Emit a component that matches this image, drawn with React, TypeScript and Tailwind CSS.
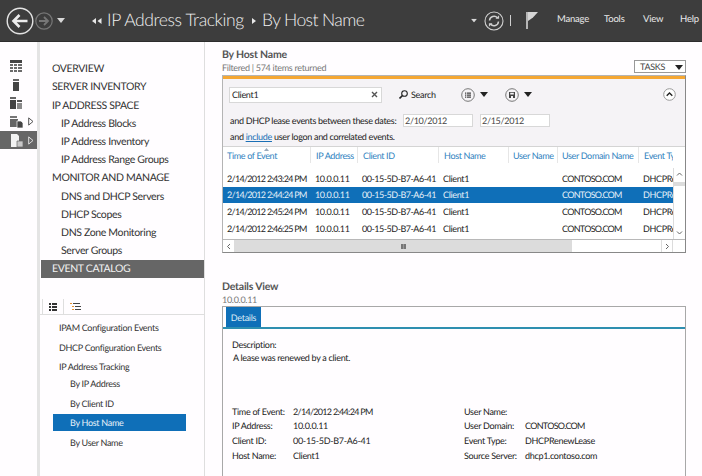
const navItems = [
  { label: "OVERVIEW", sub: false },
  { label: "SERVER INVENTORY", sub: false },
  { label: "IP ADDRESS SPACE", sub: false },
  { label: "IP Address Blocks", sub: true },
  { label: "IP Address Inventory", sub: true },
  { label: "IP Address Range Groups", sub: true },
  { label: "MONITOR AND MANAGE", sub: false },
  { label: "DNS and DHCP Servers", sub: true },
  { label: "DHCP Scopes", sub: true },
  { label: "DNS Zone Monitoring", sub: true },
  { label: "Server Groups", sub: true },
];

const rows = [
  { time: "2/14/2012 2:43:24 PM", selected: false },
  { time: "2/14/2012 2:44:24 PM", selected: true },
  { time: "2/14/2012 2:45:24 PM", selected: false },
  { time: "2/14/2012 2:46:25 PM", selected: false },
];

const columns = [
  { label: "Time of Event", w: "w-[88px]", pl: "pl-[4px]" },
  { label: "IP Address", w: "w-[47px]", pl: "pl-[5px]" },
  { label: "Client ID", w: "w-[81px]", pl: "pl-[5px]" },
  { label: "Host Name", w: "w-[70px]", pl: "pl-[5px]" },
  { label: "User Name", w: "w-[49px]", pl: "pl-[4px]" },
  { label: "User Domain Name", w: "w-[81px]", pl: "pl-[4px]" },
  { label: "Event Type", w: "w-[34px]", pl: "pl-[5px]" },
];

const leftFields = [
  ["Time of Event:", "2/14/2012 2:44:24 PM"],
  ["IP Address:", "10.0.0.11"],
  ["Client ID:", "00-15-5D-B7-A6-41"],
  ["Host Name:", "Client1"],
];

const rightFields = [
  ["User Name:", ""],
  ["User Domain:", "CONTOSO.COM"],
  ["Event Type:", "DHCPRenewLease"],
  ["Source Server:", "dhcp1.contoso.com"],
];

const Caret = ({ className }: { className: string }) => (
  <svg width="8" height="5" viewBox="0 0 8 5" className={className}>
    <path d="M0 0h8L4 5z" fill="currentColor" />
  </svg>
);

const RailIcons = () => (
  <div className="w-[37px] shrink-0 flex flex-col pt-[15px]">
    <div className="h-[18px] pl-[10px] flex items-center">
      <svg width="12" height="12" viewBox="0 0 12 12">
        <path d="M0 0h12v3H0z" fill="#444" />
        <path d="M0 4h3v2H0zM4 4h3v2H4zM8 4h4v2H8zM0 7h3v2H0zM4 7h3v2H4zM8 7h4v2H8zM0 10h3v2H0zM4 10h3v2H4zM8 10h4v2H8z" fill="#6b6b6b" />
      </svg>
    </div>
    <div className="h-[19px] pl-[13px] flex items-center">
      <svg width="6" height="12" viewBox="0 0 6 12">
        <path d="M0 0h6v2H0z" fill="#666" />
        <path d="M0 3h6v9H0z" fill="#444" />
      </svg>
    </div>
    <div className="h-[18px] pl-[10px] flex items-center">
      <svg width="12" height="12" viewBox="0 0 12 12">
        <path d="M0 0h6v2H0z" fill="#666" />
        <path d="M0 3h6v9H0z" fill="#444" />
        <path d="M7 3h5v2H7z" fill="#555" />
        <path d="M7 6h5v6H7z" fill="#8a8a8a" />
      </svg>
    </div>
    <div className="h-[19px] pl-[10px] flex items-center gap-[5px]">
      <svg width="13" height="12" viewBox="0 0 13 12">
        <path d="M0 0h7v2H0z" fill="#777" />
        <path d="M0 3h8v8H0z" fill="#666" />
        <path d="M7 5h4l2 2v5H7z" fill="#444" stroke="#fff" strokeWidth="0.7" />
      </svg>
      <svg width="6" height="9" viewBox="0 0 6 9">
        <path d="M0.7 0.9v7.2L5 4.5z" fill="none" stroke="#555" />
      </svg>
    </div>
    <div className="h-[18px] pl-[11px] flex items-center gap-[5px] bg-[#666666]">
      <svg width="12" height="13" viewBox="0 0 12 13">
        <path d="M0 0h6l2 2v11H0z" fill="#f2f2f2" />
        <path d="M6 7h6v6H6z" fill="#c8c8c8" stroke="#666" strokeWidth="0.7" />
      </svg>
      <svg width="6" height="9" viewBox="0 0 6 9">
        <path d="M0.7 0.9v7.2L5 4.5z" fill="none" stroke="#ddd" />
      </svg>
    </div>
  </div>
);

const Header = () => (
  <header className="h-[42px] shrink-0 flex items-center bg-[#3d3d3d] border-b border-[#2d2d2d] text-white">
    <svg width="28" height="28" viewBox="0 0 28 28" className="ml-[6px]">
      <circle cx="14" cy="14" r="12.8" fill="none" stroke="#e4e4e4" strokeWidth="1.4" />
      <path d="M21.5 14H8M13.5 8l-6 6 6 6" fill="none" stroke="#ececec" strokeWidth="2.6" />
    </svg>
    <svg width="18" height="18" viewBox="0 0 18 18" className="ml-[1px]">
      <circle cx="9" cy="9" r="8.2" fill="none" stroke="#777" strokeWidth="1.2" />
      <path d="M4 9h9M9 5l4 4-4 4" fill="none" stroke="#777" strokeWidth="1.8" />
    </svg>
    <Caret className="ml-[4px] text-[#d8d8d8]" />
    <svg width="10" height="6" viewBox="0 0 10 6" className="ml-[27px]">
      <path d="M4 0v6L0 3zM9.500 0v6l-4-3z" fill="#e8e8e8" />
    </svg>
    <span className="ml-[5px] w-[137px] text-[17.5px] font-light tracking-[-0.4px] text-[#f2f2f2] whitespace-nowrap">IP Address Tracking</span>
    <svg width="4" height="6" viewBox="0 0 4 6" className="ml-[8px]">
      <path d="M0 0v6l4-3z" fill="#e8e8e8" />
    </svg>
    <span className="ml-[6px] text-[17.5px] font-light tracking-[-0.6px] text-[#f2f2f2] whitespace-nowrap">By Host Name</span>
    <Caret className="ml-auto text-[#d8d8d8] scale-75" />
    <svg width="20" height="20" viewBox="0 0 20 20" className="ml-[6px]">
      <circle cx="10" cy="10" r="9" fill="none" stroke="#d0d0d0" strokeWidth="1.1" />
      <path d="M5.5 9.5A4.5 4.5 0 0 1 13.5 7M14.5 10.5A4.5 4.5 0 0 1 6.5 13" fill="none" stroke="#d0d0d0" strokeWidth="1.5" />
      <path d="M11.5 7.8h3.6V4.2zM8.5 12.2H4.9v3.6z" fill="#d0d0d0" />
    </svg>
    <div className="ml-[6px] w-px h-[11px] bg-[#cfcfcf]" />
    <svg width="12" height="17" viewBox="0 0 12 17" className="ml-[15px]">
      <path d="M0 0h2v17H0z" fill="#b5b5b5" />
      <path d="M2 0h10L7 5.500 2 9z" fill="#d5d5d5" />
    </svg>
    <nav className="ml-[19px] flex text-[9.5px] tracking-[-0.2px] text-[#e8e8e8]">
      <span className="w-[47px]">Manage</span>
      <span className="w-[39px]">Tools</span>
      <span className="w-[37px]">View</span>
      <span className="w-[22px]">Help</span>
    </nav>
  </header>
);

const Sidebar = () => (
  <aside className="w-[165px] shrink-0 border-r border-[#dedede] pt-[18px] text-[10.5px] tracking-[-0.35px] text-[#333]">
    {navItems.map((item) => (
      <div key={item.label} className={`h-[18.2px] pt-[2px] flex items-center ${item.sub ? "pl-[21px]" : "pl-[12px]"}`}>
        {item.label}
      </div>
    ))}
    <div className="h-[18px] pt-[2px] ml-px flex items-center pl-[11px] bg-[#666666] text-[#f2f2f2]">EVENT CATALOG</div>

    <div className="mt-[21px] h-[16px] flex border-b border-[#dedede]">
      <div className="ml-[2px] w-[22px] h-[16px] border-l border-r border-[#dedede] flex items-center justify-center">
        <svg width="8" height="8" viewBox="0 0 8 8">
          <path d="M0 0h2v2H0zM3 0h5v2H3zM0 3h2v2H0zM3 3h5v2H3zM0 6h2v2H0zM3 6h5v2H3z" fill="#333" />
        </svg>
      </div>
      <div className="ml-[6px] flex items-center">
        <svg width="11" height="8" viewBox="0 0 11 8">
          <path d="M0 0h2v1H0zM2 3h2v1H2zM2 6h2v1H2z" fill="#e8912d" />
          <path d="M3 0h7v1H3zM5 3h6v1H5zM5 6h6v1H5z" fill="#444" />
        </svg>
      </div>
    </div>

    <div className="mt-[3.500px] text-[9px] tracking-[-0.3px]">
      <div className="h-[17px] pt-[2px] mb-[2.6px] pl-[19px] flex items-center">IPAM Configuration Events</div>
      <div className="h-[17px] pt-[2px] mb-[2.6px] pl-[19px] flex items-center">DHCP Configuration Events</div>
      <div className="h-[17px] pt-[1px] pl-[19px] flex items-center">IP Address Tracking</div>
      <div className="h-[17px] pt-[1px] mb-[2.6px] pl-[30px] flex items-center">By IP Address</div>
      <div className="h-[17px] pt-[2px] mb-[2.6px] pl-[30px] flex items-center">By Client ID</div>
      <div className="h-[17px] pt-[1px] mb-[2.6px] ml-[13px] w-[133px] pl-[17px] flex items-center bg-[#0f6fb8] text-[#e8f1f8]">By Host Name</div>
      <div className="h-[17px] pt-[2px] pl-[30px] flex items-center">By User Name</div>
    </div>
  </aside>
);

const SmallRoundIcon = ({ kind }: { kind: "list" | "save" }) => (
  <svg width="14" height="14" viewBox="0 0 14 14">
    <circle cx="7" cy="7" r="6.3" fill="none" stroke="#777" />
    {kind === "list" ? (
      <path d="M4 4.500h1.300v1.300H4zM6 4.500h4v1.300H6zM4 6.500h1.300v1.300H4zM6 6.500h4v1.300H6zM4 8.500h1.300v1.300H4zM6 8.500h4v1.300H6z" fill="#444" />
    ) : (
      <path fillRule="evenodd" d="M4 4h6v6H4zM5.200 4.800v1.800h3.600V4.800zM6 8v2h2V8z" fill="#444" />
    )}
  </svg>
);

const FilterBar = () => (
  <div className="h-[68px] bg-[#f5f3f6] border-b border-[#d4d4d4] text-[9px] tracking-[-0.3px] text-[#222]">
    <div className="h-[31px] flex items-center pl-[6px]">
      <div className="w-[153px] h-[16px] flex items-center justify-between px-[2px] bg-white border border-[#d8d8d8]">
        <span>Client1</span>
        <svg width="7" height="7" viewBox="0 0 7 7" className="mr-[1px]">
          <path d="M1 1l5 5M6 1L1 6" stroke="#555" strokeWidth="1.4" />
        </svg>
      </div>
      <svg width="9" height="9" viewBox="0 0 9 9" className="ml-[17px]">
        <circle cx="5.500" cy="3.500" r="2.800" fill="none" stroke="#222" strokeWidth="1.1" />
        <path d="M3.500 5.500L0.500 8.500" stroke="#222" strokeWidth="1.6" />
      </svg>
      <span className="ml-[3px] w-[25px]">Search</span>
      <div className="ml-[25px]">
        <SmallRoundIcon kind="list" />
      </div>
      <Caret className="ml-[5px] text-[#222]" />
      <div className="ml-[17px]">
        <SmallRoundIcon kind="save" />
      </div>
      <Caret className="ml-[5px] text-[#222]" />
      <svg width="13" height="13" viewBox="0 0 13 13" className="ml-auto mr-[9px]">
        <circle cx="6.500" cy="6.500" r="5.800" fill="#fff" stroke="#999" />
        <path d="M3.700 7.800l2.800-2.800 2.800 2.800" fill="none" stroke="#222" strokeWidth="1.4" />
      </svg>
    </div>
    <div className="h-[20px] pt-px flex items-center pl-[7px]">
      <span className="w-[173px] whitespace-nowrap">and DHCP lease events between these dates:</span>
      <span className="w-[70px] h-[13px] flex items-center pl-px bg-white border border-[#d8d8d8] text-[#444]">2/10/2012</span>
      <span className="ml-[7px] w-[70px] h-[13px] flex items-center pl-px bg-white border border-[#d8d8d8] text-[#444]">2/15/2012</span>
    </div>
    <div className="h-[14px] flex items-center pl-[7px] whitespace-nowrap">
      and&nbsp;<span className="text-[#1a6fb5] underline">include</span>&nbsp;user logon and correlated events.
    </div>
  </div>
);

const ResultsTable = () => (
  <div className="relative bg-white text-[9px] tracking-[-0.35px]">
    <div className="h-[16px] flex items-center w-[450px] overflow-hidden text-[#2f82c0] whitespace-nowrap">
      {columns.map((col) => (
        <div key={col.label} className={`${col.w} ${col.pl} pt-px shrink-0 h-full flex items-center overflow-hidden border-r border-[#e6e6e6] last:border-r-0`}>
          {col.label}
        </div>
      ))}
    </div>
    <svg width="5" height="3" viewBox="0 0 5 3" className="absolute left-[41px] top-px">
      <path d="M0 3h5L2.500 0z" fill="#9ab" />
    </svg>
    <div className="flex">
      <div className="w-[450px] pt-[7px] h-[76px] overflow-hidden text-[#222] whitespace-nowrap">
        {rows.map((row) => (
          <div key={row.time} className={`h-[16.7px] flex items-center ${row.selected ? "bg-[#0f6fb8] text-[#e8f1f8]" : ""}`}>
            <div className="w-[92px] pl-[4px] shrink-0 tracking-[-0.7px]">{row.time}</div>
            <div className="w-[47px] shrink-0">10.0.0.11</div>
            <div className="w-[81px] shrink-0 tracking-[-0.5px]">00-15-5D-B7-A6-41</div>
            <div className="w-[119px] shrink-0">Client1</div>
            <div className="w-[81px] shrink-0 tracking-[-0.7px]">CONTOSO.COM</div>
            <div className="w-[30px] shrink-0 overflow-hidden">DHCPRenewLease</div>
          </div>
        ))}
      </div>
      <div className="w-[12px] ml-auto mt-[5px] h-[71px] flex flex-col items-center border-l border-[#dcdcdc] bg-white">
        <svg width="7" height="12" viewBox="0 0 7 12"><path d="M1 7.500L3.500 5 6 7.500" fill="none" stroke="#666" /></svg>
        <div className="w-full h-[4px] mt-[2px] bg-[#dcdcdc]" />
        <svg width="7" height="12" viewBox="0 0 7 12" className="mt-auto"><path d="M1 4.500L3.500 7 6 4.500" fill="none" stroke="#666" /></svg>
      </div>
    </div>
    <div className="h-[13px] flex items-stretch border-t border-[#b8b8b8]">
      <div className="w-[12px] flex items-center justify-center border-r border-[#dcdcdc]">
        <svg width="5" height="7" viewBox="0 0 5 7"><path d="M4 1L1.500 3.500 4 6" fill="none" stroke="#666" /></svg>
      </div>
      <div className="w-[337px] bg-[#dcdcdc] flex items-center justify-center">
        <div className="w-[5px] h-[5px] border-x-2 border-[#777] bg-[#999]" />
      </div>
      <div className="w-[89px]" />
      <div className="w-[12px] flex items-center justify-center border-x border-[#dcdcdc]">
        <svg width="5" height="7" viewBox="0 0 5 7"><path d="M1 1l2.500 2.500L1 6" fill="none" stroke="#666" /></svg>
      </div>
    </div>
  </div>
);

const Field = ({ label, value }: { label: string; value: string }) => (
  <div className="h-[14.7px] flex items-center whitespace-nowrap">
    <span className="w-[61px] shrink-0">{label}</span>
    <span className={value.includes("PM") || value.includes("CONTOSO") ? "tracking-[-0.7px]" : ""}>{value}</span>
  </div>
);

const DetailsBox = () => (
  <div className="flex-1 border border-b-0 border-[#a8a8a8] text-[9px] tracking-[-0.3px] text-[#222]">
    <div className="h-[22px] border-b-2 border-[#2e8fb0] pl-[3px]">
      <div className="w-[35px] h-[20px] pt-[2px] flex items-center justify-center bg-[#0f6fb8] text-[#dcebf6]">Details</div>
    </div>
    <div className="pl-[9px] pt-[9px]">
      <div className="h-[13px] flex items-center">Description:</div>
      <div className="h-[13px] flex items-center pl-px">A lease was renewed by a client.</div>
      <div className="mt-[40px] flex">
        <div className="w-[232px]">
          {leftFields.map(([label, value]) => (
            <Field key={label} label={label} value={value} />
          ))}
        </div>
        <div>
          {rightFields.map(([label, value]) => (
            <Field key={label} label={label} value={value} />
          ))}
        </div>
      </div>
    </div>
  </div>
);

export default function App() {
  return (
    <div className="w-[702px] h-[476px] overflow-hidden flex flex-col bg-[#fffdff] font-['Lato','Open_Sans',sans-serif] [text-rendering:geometricPrecision]">
      <Header />
      <div className="flex-1 flex min-h-0">
        <RailIcons />
        <div className="w-[3px] shrink-0 bg-[#e4e4e4]" />
        <Sidebar />
        <main className="flex-1 flex flex-col pl-[17px] pr-[16px] pt-[7px] min-w-0">
          <div className="h-[26px] flex justify-between">
            <div>
              <div className="text-[10.5px] leading-[13px] font-bold tracking-[-0.2px] text-[#555]">By Host Name</div>
              <div className="text-[9px] leading-[12px] tracking-[-0.3px] text-[#777]">Filtered | 574 items returned</div>
            </div>
            <div className="mt-[11px] w-[52px] h-[13px] pt-px flex items-center justify-between pl-[5px] pr-[2px] border border-[#999] bg-white text-[9px] tracking-[-0.3px] text-[#444]">
              TASKS
              <Caret className="text-[#222]" />
            </div>
          </div>
          <section className="h-[178px] shrink-0 border border-[#b4b4b4] border-r-[#888] border-b-[#888]">
            <div className="h-[3px] bg-[#f5a733]" />
            <FilterBar />
            <ResultsTable />
          </section>
          <div className="mt-[28px] text-[10.5px] leading-[13px] font-bold tracking-[-0.2px] text-[#555]">Details View</div>
          <div className="text-[9px] leading-[12px] tracking-[-0.3px] text-[#777]">10.0.0.11</div>
          <DetailsBox />
        </main>
      </div>
    </div>
  );
}
